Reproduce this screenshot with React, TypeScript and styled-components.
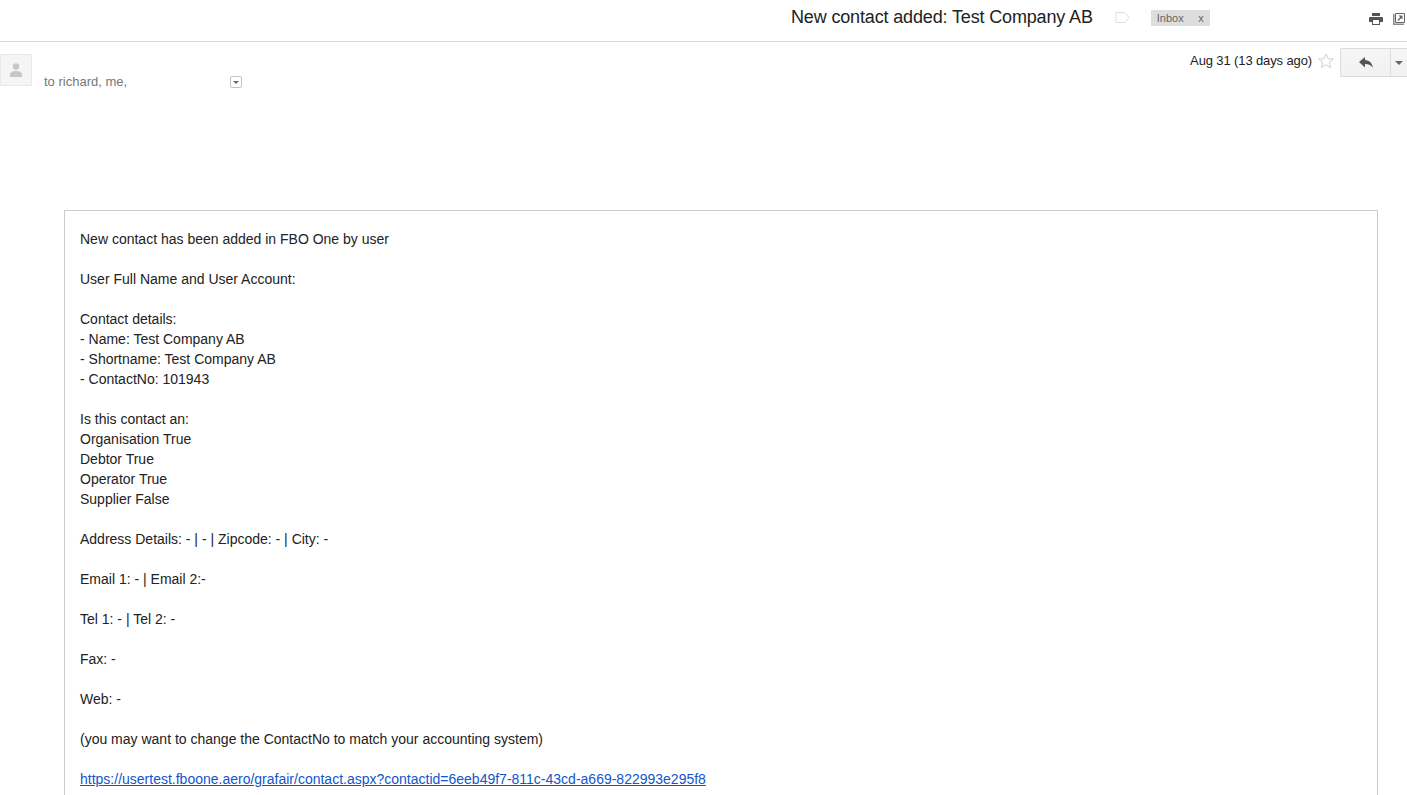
import styled, {createGlobalStyle} from "styled-components";
import {FC} from "react";

const GlobalStyles = createGlobalStyle`
  html, body {
    overflow: hidden;
    padding: 0;
    margin: 0;
    height: 100%;
    background: #fff;
    font-family: "Liberation Sans", Arial, sans-serif;
  }
`;

const Page = styled.div`
  height: 795px;
  overflow: hidden;
`;

const SubjectBar = styled.div`
  height: 41px;
  border-bottom: 1px solid #d8d8d8;
  display: flex;
  align-items: center;
  padding-left: 791px;
  box-sizing: content-box;
`;

const Subject = styled.h1`
  margin: 0;
  font-size: 18px;
  letter-spacing: -0.15px;
  font-weight: 400;
  color: #222;
  white-space: nowrap;
  position: relative;
  top: -3px;
`;

const LabelIcon = styled.svg`
  width: 15px;
  height: 11px;
  margin-left: 22px;
  position: relative;
  top: -3px;
`;

const InboxTag = styled.div`
  width: 59px;
  height: 16px;
  margin-left: 21px;
  padding: 0 6px;
  box-sizing: border-box;
  background: #dddddd;
  color: #666;
  font-size: 11px;
  line-height: 16px;
  display: flex;
  justify-content: space-between;
  position: relative;
  top: -3px;
`;

const BarIcons = styled.div`
  margin-left: auto;
  margin-right: 2px;
  display: flex;
  gap: 10px;
  position: relative;
  top: -2px;
`;

const Meta = styled.div`
  display: flex;
  height: 168px;
`;

const Avatar = styled.div`
  width: 32px;
  height: 32px;
  margin-top: 12px;
  box-sizing: border-box;
  background: #f5f5f5;
  border: 1px solid #e8e8e8;
  display: flex;
  align-items: center;
  justify-content: center;
`;

const Recipients = styled.div`
  margin: 32px 0 0 12px;
  width: 186px;
  height: 16px;
  font-size: 13px;
  line-height: 16px;
  color: #777;
`;

const ExpandButton = styled.div`
  width: 12px;
  height: 12px;
  margin-top: 34px;
  box-sizing: border-box;
  border: 1px solid #c4c4c4;
  border-radius: 2px;
  display: flex;
  align-items: center;
  justify-content: center;
  &::after {
    content: "";
    border-left: 3px solid transparent;
    border-right: 3px solid transparent;
    border-top: 3px solid #666;
  }
`;

const MetaRight = styled.div`
  margin-left: auto;
  display: flex;
  align-items: flex-start;
  padding-top: 6px;
`;

const DateText = styled.div`
  font-size: 13px;
  letter-spacing: -0.12px;
  line-height: 16px;
  margin-top: 5px;
  color: #222;
  white-space: nowrap;
`;

const Star = styled.svg`
  width: 16px;
  height: 16px;
  margin: 5px 6px 0 6px;
`;

const ReplyGroup = styled.div`
  display: flex;
  height: 29px;
  width: 67px;
  box-sizing: border-box;
  border: 1px solid #dcdcdc;
  border-right: 0;
  border-radius: 2px 0 0 2px;
  background: linear-gradient(#f6f6f6, #f1f1f1);
`;

const ReplyPart = styled.div`
  width: 49px;
  display: flex;
  align-items: center;
  justify-content: center;
  border-right: 1px solid #dcdcdc;
`;

const ReplyCaret = styled.div`
  flex: 1;
  display: flex;
  align-items: center;
  justify-content: center;
  &::after {
    content: "";
    border-left: 4px solid transparent;
    border-right: 4px solid transparent;
    border-top: 4px solid #666;
  }
`;

const Card = styled.div`
  margin: 0 29px 0 64px;
  border: 1px solid #cccccc;
  padding: 18px 15px;
  font-size: 14px;
  line-height: 20px;
  color: #222;
`;

const Line = styled.div<{$gap?: boolean}>`
  min-height: 20px;
  margin-bottom: ${p => p.$gap ? "20px" : "0"};
`;

const Link = styled.a`
  color: #1155cc;
  text-decoration: underline;
`;

const lines: [string, boolean?][] = [
    ["New contact has been added in FBO One by user", true],
    ["User Full Name and User Account:", true],
    ["Contact details:"],
    ["- Name: Test Company AB"],
    ["- Shortname: Test Company AB"],
    ["- ContactNo: 101943", true],
    ["Is this contact an:"],
    ["Organisation True"],
    ["Debtor True"],
    ["Operator True"],
    ["Supplier False", true],
    ["Address Details: - | - | Zipcode: - | City: -", true],
    ["Email 1: - | Email 2:-", true],
    ["Tel 1: - | Tel 2: -", true],
    ["Fax: -", true],
    ["Web: -", true],
    ["(you may want to change the ContactNo to match your accounting system)", true],
];

const contactUrl = "https://usertest.fboone.aero/grafair/contact.aspx?contactid=6eeb49f7-811c-43cd-a669-822993e295f8";

const App: FC = () => {
    return <Page>
        <GlobalStyles/>
        <SubjectBar>
            <Subject>New contact added: Test Company AB</Subject>
            <LabelIcon viewBox="0 0 15 11">
                <path d="M1 .5h9l4 5-4 5H1z" fill="#fff" stroke="#dedede"/>
            </LabelIcon>
            <InboxTag><span>Inbox</span><span>x</span></InboxTag>
            <BarIcons>
                <svg width="14" height="12" viewBox="0 0 14 12">
                    <path fill="#555" d="M3 0h8v3H3zM1 4h12a1 1 0 0 1 1 1v4h-3v3H3V9H0V5a1 1 0 0 1 1-1z"/>
                    <path fill="#fff" d="M4 7h6v4H4z"/>
                </svg>
                <svg width="12" height="12" viewBox="0 0 12 12">
                    <path fill="none" stroke="#8a8a8a" strokeWidth="1.500" d="M.75 1v10.250H11"/>
                    <path fill="none" stroke="#666" d="M2.500.5h9v9h-9z"/>
                    <path fill="#666" d="M5.500 2.500h4v4L8.200 5.200 5.500 8 4.500 7l2.700-2.800z"/>
                </svg>
            </BarIcons>
        </SubjectBar>
        <Meta>
            <Avatar>
                <svg width="14" height="14" viewBox="0 0 14 14">
                    <circle cx="7" cy="3.500" r="3.200" fill="#c8c8c8"/>
                    <path fill="#c8c8c8" d="M1 14v-2.500C1 9 4 8 7 8s6 1 6 3.500V14z"/>
                </svg>
            </Avatar>
            <Recipients>to richard, me,</Recipients>
            <ExpandButton/>
            <MetaRight>
                <DateText>Aug 31 (13 days ago)</DateText>
                <Star viewBox="0 0 16 16">
                    <path fill="#fff" stroke="#d0d0d0" d="M8 .9l2.100 5h5.300l-4.200 3.400 1.500 5.400L8 11.700l-4.700 3 1.500-5.400L.6 5.900h5.300z"/>
                </Star>
                <ReplyGroup>
                    <ReplyPart>
                        <svg width="14" height="11" viewBox="0 0 14 11">
                            <path fill="#555" d="M6 0v3c4.500.3 7 3 8 8-1.700-2.800-4-4-8-4v3.500L0 5z"/>
                        </svg>
                    </ReplyPart>
                    <ReplyCaret/>
                </ReplyGroup>
            </MetaRight>
        </Meta>
        <Card>
            {lines.map(([text, gap], i) => <Line key={i} $gap={gap}>{text}</Line>)}
            <Line><Link href={contactUrl}>{contactUrl}</Link></Line>
        </Card>
    </Page>;
};
export default App;
